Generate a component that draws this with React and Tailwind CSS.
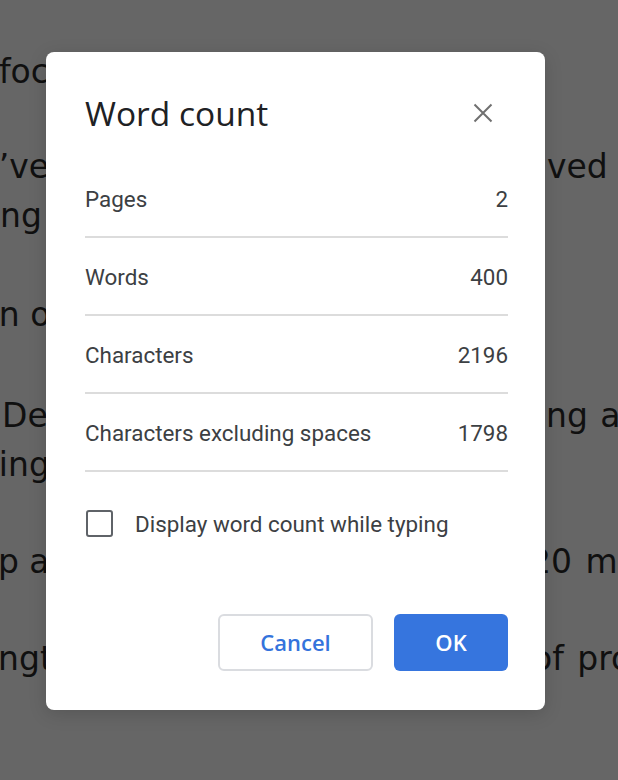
import React from "react";

function Line({ left, leftClass, right, rightClass }) {
  return (
    <div className="grid h-[49px] grid-cols-[546px_72px] overflow-hidden">
      <div className="overflow-hidden">
        <span className={leftClass}>{left}</span>
      </div>
      <div className="overflow-visible">
        {right ? <span className={rightClass}>{right}</span> : null}
      </div>
    </div>
  );
}

function Row({ label, value }) {
  return (
    <div className="flex items-center justify-between border-b-2 border-[#dcdcdc] pt-[26px] pb-[24px] text-[22.4px] leading-[26px] text-[#3c4043]">
      <span>{label}</span>
      <span>{value}</span>
    </div>
  );
}

export default function App() {
  return (
    <div className="relative h-[780px] w-[618px] overflow-hidden bg-[#666666]">
      <div className="whitespace-nowrap pt-[47px] font-['DejaVu_Sans',sans-serif] text-[33px] leading-[49px] text-[#101010]">
        <div>
          <Line left="focus on it" leftClass="inline-block ml-[-1px]" />
        </div>
        <div className="mt-[46px]">
          <Line
            left="I’ve always moved"
            leftClass="inline-block ml-[-11px]"
            right="ved"
            rightClass="inline-block ml-[1px]"
          />
          <Line left="thing" leftClass="inline-block ml-[-43px]" />
        </div>
        <div className="mt-[50px]">
          <Line left="In order" leftClass="inline-block ml-[-11px]" />
        </div>
        <div className="mt-[52px]">
          <Line
            left="Deep work"
            leftClass="inline-block ml-[2px]"
            right="ng about"
            rightClass="inline-block ml-[0px] [word-spacing:2px]"
          />
          <Line left="working" leftClass="inline-block ml-[-81px]" />
        </div>
        <div className="mt-[48px]">
          <Line
            left="up a"
            leftClass="inline-block ml-[-23px]"
            right="20 minutes"
            rightClass="inline-block ml-[-16px] [word-spacing:3px]"
          />
        </div>
        <div className="mt-[48px]">
          <Line
            left="Length"
            leftClass="inline-block ml-[-40px]"
            right="of productivity"
            rightClass="inline-block ml-[-14px] [word-spacing:3px]"
          />
        </div>
      </div>

      <div className="absolute left-[46px] top-[52px] w-[499px] rounded-[8px] bg-white pt-[39px] pb-[39px] pl-[39px] pr-[37px] font-['Roboto',sans-serif] shadow-[0_4px_18px_rgba(0,0,0,0.15)]">
        <div className="flex h-[44px] items-center justify-between">
          <h2 className="font-['Open_Sans',sans-serif] text-[33.5px] leading-[44px] text-[#202124]">
            Word count
          </h2>
          <button className="flex h-[44px] w-[50px] items-center justify-center">
            <svg width="20" height="20" viewBox="0 0 20 20" fill="none">
              <path d="M1.5 1.5L18.5 18.5M18.5 1.5L1.5 18.5" stroke="#707070" strokeWidth="2" />
            </svg>
          </button>
        </div>

        <div className="mt-[25px]">
          <Row label="Pages" value="2" />
          <Row label="Words" value="400" />
          <Row label="Characters" value="2196" />
          <Row label="Characters excluding spaces" value="1798" />
        </div>

        <div className="mt-[38px] flex h-[27px] items-center">
          <div className="ml-[1px] h-[27px] w-[27px] rounded-[3px] border-2 border-[#5f6368]" />
          <span className="ml-[22px] text-[22.4px] leading-[26px] text-[#3c4043]">
            Display word count while typing
          </span>
        </div>

        <div className="mt-[77px] flex justify-end gap-[21px]">
          <button className="h-[57px] w-[155px] rounded-[6px] border-2 border-[#dadce0] bg-white font-['Open_Sans',sans-serif] text-[22px] font-semibold text-[#3473dc]">
            Cancel
          </button>
          <button className="h-[57px] w-[114px] rounded-[6px] bg-[#3675de] font-['Open_Sans',sans-serif] text-[22px] font-semibold text-white">
            OK
          </button>
        </div>
      </div>
    </div>
  );
}
